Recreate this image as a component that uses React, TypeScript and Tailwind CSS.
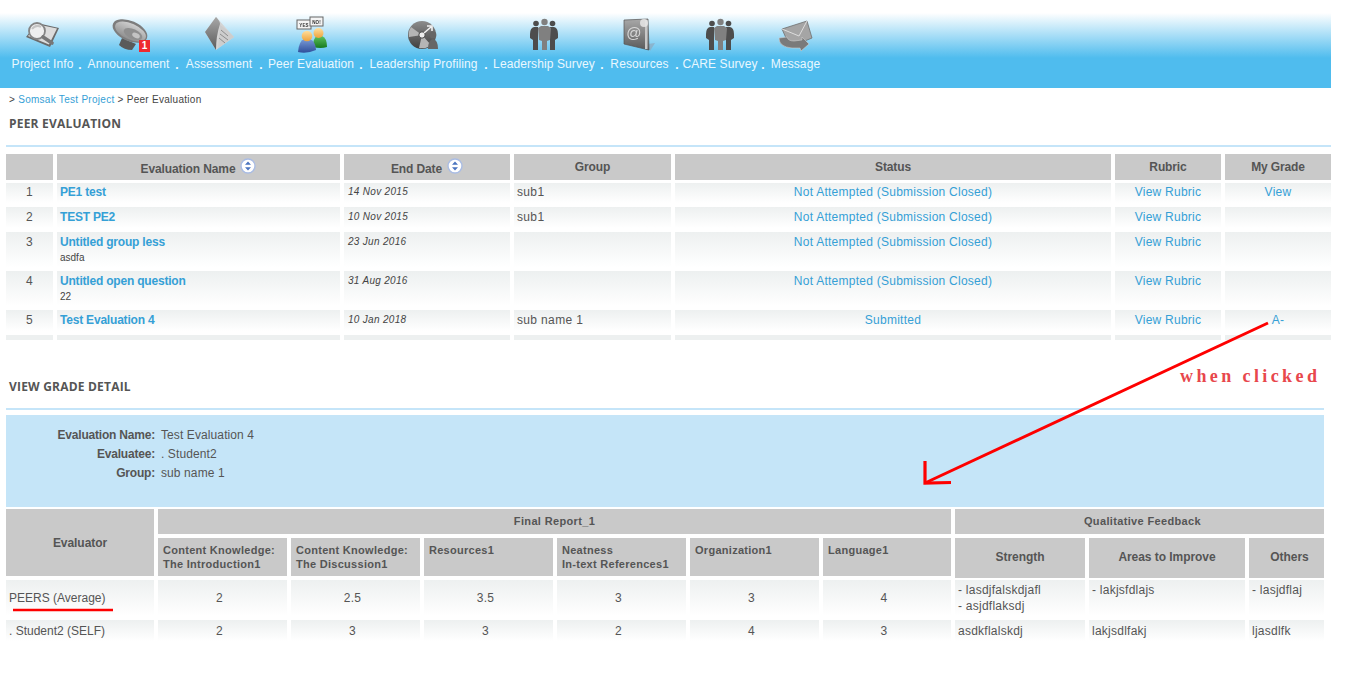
import React from "react";

const Grad = ({ id, a, b }: { id: string; a: string; b: string }) => (
  <linearGradient id={id} x1="0" y1="0" x2="0" y2="1">
    <stop offset="0" stopColor={a} />
    <stop offset="1" stopColor={b} />
  </linearGradient>
);

const Defs = () => (
  <svg width="0" height="0" className="absolute">
    <defs>
      <Grad id="g1" a="#a8a8a8" b="#5a5a5a" />
      <Grad id="g2" a="#cfcfcf" b="#8f8f8f" />
      <Grad id="g3" a="#8c8c8c" b="#3f3f3f" />
      <Grad id="gb" a="#7b9bd6" b="#2f4f9c" />
      <Grad id="gg" a="#5fc25f" b="#167a1e" />
      <Grad id="gs" a="#ffdf9e" b="#eda23c" />
    </defs>
  </svg>
);

const S = ({ children }: { children: React.ReactNode }) => (
  <svg width="50" height="40" viewBox="0 0 50 40" className="block blur-[0.4px] shrink-0">
    {children}
  </svg>
);

const ProjectIcon = () => (
  <S>
    <polygon points="8,23 19,9 41,14 32,33" fill="#6a6a6a" />
    <polygon points="10,22 20,10.5 39,14.5 31,30.5" fill="#dcdcdc" />
    <circle cx="19" cy="17" r="8" fill="#efefef" stroke="#858585" strokeWidth="1.8" />
    <path d="M14 15q4-5 9-2" stroke="#c4c4c4" strokeWidth="2" fill="none" />
    <path d="M25 23l9 6" stroke="#777" strokeWidth="3.6" strokeLinecap="round" />
  </S>
);

const SpeakerIcon = () => (
  <S>
    <path d="M18 24l-3 7q5 5 13 5l4-6z" fill="#5a5a5a" />
    <ellipse cx="26" cy="17" rx="18.5" ry="10" transform="rotate(24 26 17)" fill="#7d7d7d" />
    <ellipse cx="26.5" cy="17.5" rx="16.5" ry="8" transform="rotate(24 26.5 17.5)" fill="url(#g2)" />
    <ellipse cx="29" cy="20" rx="10" ry="5" transform="rotate(24 29 20)" fill="#8f8f8f" />
    <ellipse cx="32" cy="21.5" rx="4" ry="2.4" transform="rotate(24 32 21.5)" fill="#c4c4c4" />
  </S>
);

const FolderIcon = () => (
  <S>
    <polygon points="11,18 22,3 40,23 22,36" fill="#d4d4d4" />
    <path d="M11 18L22 3q4 4 4 7q-4 12-4 26z" fill="url(#g1)" />
    <polygon points="26,11 33,16 40,23 24,34" fill="#cdcdcd" />
    <path d="M27 16l7 6M26 20l8 6M25 24l6 5" stroke="#8d8d8d" strokeWidth="1" />
  </S>
);

const PeerIcon = () => (
  <S>
    <rect x="11" y="6" width="14" height="9" fill="#f4f4f4" stroke="#666" />
    <text x="18" y="12.5" textAnchor="middle" fontSize="4.5" fontWeight="700" fill="#333" fontFamily="'Liberation Sans',sans-serif">YES</text>
    <rect x="24" y="3" width="13" height="9" fill="#f4f4f4" stroke="#666" />
    <text x="30.5" y="9.5" textAnchor="middle" fontSize="4.5" fontWeight="700" fill="#333" fontFamily="'Liberation Sans',sans-serif">NO!</text>
    <path d="M27 33q0-9 4-11h5q5 2 5 11q-6 2-14 0z" fill="url(#gg)" />
    <circle cx="32.5" cy="19" r="5" fill="url(#gs)" />
    <path d="M12 38q1-11 6-13h6q6 3 6 11q-9 4-18 2z" fill="url(#gb)" />
    <circle cx="21" cy="22" r="5.3" fill="url(#gs)" />
  </S>
);

const DiscIcon = () => (
  <S>
    <circle cx="23" cy="21" r="14" fill="url(#g3)" />
    <path d="M23 21L12 13a14 14 0 0 0-2 10zM23 21l9 10a14 14 0 0 1-12 3z" fill="#b5b5b5" />
    <circle cx="23" cy="21" r="3.2" fill="#eee" stroke="#444" />
    <path d="M25 19l7-6M28 12h5v5" stroke="#f2f2f2" strokeWidth="1.6" fill="none" />
    <circle cx="34" cy="21" r="3.4" fill="#666" />
    <path d="M29 35q0-9 5-10q5 1 5 10z" fill="#666" />
  </S>
);

const PeopleIcon = () => (
  <S>
    <circle cx="17" cy="9.5" r="2.8" fill="#4d4d4d" />
    <circle cx="33.5" cy="9.5" r="2.8" fill="#4d4d4d" />
    <path d="M11 20q0-6 4-7h4v23h-5v-10l-3-2zM39 20q0-6-4-7h-4v23h5v-10l3-2z" fill="#4d4d4d" />
    <circle cx="25.5" cy="8" r="3.2" fill="#808080" />
    <path d="M19 14l3-2h7l3 2-1 12-3 1v9h-5v-9l-3-1z" fill="#808080" />
  </S>
);

const BookIcon = () => (
  <S>
    <polygon points="33,30 40,29 35,37" fill="#8fa9bd" opacity="0.7" />
    <polygon points="9,6 33,5 34,36 9,30" fill="url(#g1)" stroke="#555" strokeWidth="0.7" />
    <rect x="30" y="6" width="2.5" height="29" fill="#c8c8c8" />
    <text x="19" y="24" textAnchor="middle" fontSize="15" fill="#d8d8d8" fontFamily="'Liberation Sans',sans-serif">@</text>
    <circle cx="29" cy="9" r="4" fill="#e8e8e8" opacity="0.85" />
  </S>
);

const MailIcon = () => (
  <S>
    <polygon points="11,15 36,7 41,24 19,33" fill="#a5a5a5" stroke="#6f6f6f" strokeWidth="0.8" />
    <path d="M11 15l17 7 8-15" stroke="#ddd" fill="none" strokeWidth="1" />
    <path d="M8 24q0 9 13 10l8 0 1 3 8-7-7-7v3l-8 1q-6 0-7-4z" fill="#7a7a7a" stroke="#cfcfcf" strokeWidth="0.6" />
  </S>
);

const nav: { label: string; w: string; icon: React.ReactNode; badge?: boolean }[] = [
  { label: "Project Info", w: "w-[61px]", icon: <ProjectIcon /> },
  { label: "Announcement", w: "w-[83px]", icon: <SpeakerIcon />, badge: true },
  { label: "Assessment", w: "w-[70px]", icon: <FolderIcon /> },
  { label: "Peer Evaluation", w: "w-[86px]", icon: <PeerIcon /> },
  { label: "Leadership Profiling", w: "w-[111px]", icon: <DiscIcon /> },
  { label: "Leadership Survey", w: "w-[102px]", icon: <PeopleIcon /> },
  { label: "Resources", w: "w-[61px]", icon: <BookIcon /> },
  { label: "CARE Survey", w: "w-[72px]", icon: <PeopleIcon /> },
  { label: "Message", w: "w-[51px]", icon: <MailIcon /> },
];

const SortIcon = () => (
  <svg width="16" height="16" viewBox="0 0 16 16" className="inline-block ml-[5px] relative -top-[3px]">
    <circle cx="8" cy="8" r="7" fill="#fff" stroke="#a9bce4" strokeWidth="1.4" />
    <path d="M8 3.5l3 3.2H5zM8 12.5l-3-3.2h6z" fill="#4a74c0" />
  </svg>
);

const cols1 = "grid grid-cols-[47px_283px_166px_157px_436px_106px_106px] gap-x-1 w-[1325px]";
const cols2 = "grid grid-cols-[148px_129px_129px_129px_129px_129px_128px_130px_156px_75px] gap-x-1 w-[1318px]";
const cell = "bg-linear-to-b from-[#edf0f0] to-white";
const th = "bg-[#c9c9c9] text-[#555] font-bold flex items-center justify-center";
const link = "text-[#35a0d6]";

const rows = [
  { n: 1, name: "PE1 test", sub: "", date: "14 Nov 2015", group: "sub1", status: "Not Attempted (Submission Closed)", grade: "View", h: "h-[20px] leading-[18px]" },
  { n: 2, name: "TEST PE2", sub: "", date: "10 Nov 2015", group: "sub1", status: "Not Attempted (Submission Closed)", grade: "", h: "h-[21px] leading-[20px]" },
  { n: 3, name: "Untitled group less", sub: "asdfa", date: "23 Jun 2016", group: "", status: "Not Attempted (Submission Closed)", grade: "", h: "h-[35px] leading-[20px]" },
  { n: 4, name: "Untitled open question", sub: "22", date: "31 Aug 2016", group: "", status: "Not Attempted (Submission Closed)", grade: "", h: "h-[35px] leading-[20px]" },
  { n: 5, name: "Test Evaluation 4", sub: "", date: "10 Jan 2018", group: "sub name 1", status: "Submitted", grade: "A-", h: "h-[21px] leading-[20px]" },
];

const crit = [
  { t: ["Content Knowledge:", "The Introduction1"], a: "2", b: "2" },
  { t: ["Content Knowledge:", "The Discussion1"], a: "2.5", b: "3" },
  { t: ["Resources1"], a: "3.5", b: "3" },
  { t: ["Neatness", "In-text References1"], a: "3", b: "2" },
  { t: ["Organization1"], a: "3", b: "4" },
  { t: ["Language1"], a: "4", b: "3" },
];

const Heading = ({ children }: { children: React.ReactNode }) => (
  <h2 className="font-['Open_Sans',sans-serif] font-bold text-[12px] tracking-[0.2px] leading-[16px] text-[#555] ml-[9px]">{children}</h2>
);

export default function App() {
  return (
    <div className="relative w-[1356px] h-[685px] overflow-hidden bg-white font-['Liberation_Sans',Arial,sans-serif] text-[12px] tracking-[0.25px] text-[#555]">
      <Defs />
      <header className="w-[1331px] h-[88px] bg-[linear-gradient(to_bottom,#ffffff_13px,#4fbcee_58px)] pt-[14px] pl-[12px] flex items-start tracking-[0.1px]">
        {nav.map((item, i) => (
          <React.Fragment key={item.label}>
            {i > 0 && (
              <span className="w-[14px] text-center text-[#f2fbff] font-bold mt-[43px] leading-[16px] tracking-normal">.</span>
            )}
            <div className={`relative flex flex-col items-center ${item.w}`}>
              {item.icon}
              {item.badge && (
                <span className="absolute left-[52px] top-[26px] w-[11px] h-[12px] bg-[#ee2a2f] text-white text-[10px] leading-[12px] font-bold text-center tracking-normal">1</span>
              )}
              <span className="text-[#eaf8ff] leading-[16px] mt-[2px] whitespace-nowrap">{item.label}</span>
            </div>
          </React.Fragment>
        ))}
      </header>

      <nav className="text-[10px] tracking-[0.28px] leading-[14px] ml-[9px] mt-[5px] text-[#444]">
        &gt; <span className={link}>Somsak Test Project</span> &gt; Peer Evaluation
      </nav>

      <div className="mt-[9px]">
        <Heading>PEER EVALUATION</Heading>
      </div>

      <div className="ml-[6px] w-[1325px] h-[2px] bg-[#c5e5f9] mt-[13px]" />

      <section className="ml-[6px] mt-[7px] h-[186px] overflow-hidden">
        <div className={`${cols1} h-[26px] mb-[3px] tracking-[-0.12px]`}>
          <div className={th} />
          <div className={`${th} pt-[3px]`}>Evaluation Name<SortIcon /></div>
          <div className={`${th} pt-[3px]`}>End Date<SortIcon /></div>
          <div className={th}>Group</div>
          <div className={th}>Status</div>
          <div className={th}>Rubric</div>
          <div className={th}>My Grade</div>
        </div>
        {rows.map((r) => (
          <div key={r.n} className={`${cols1} ${r.h} mb-[4px]`}>
            <div className={`${cell} text-center`}>{r.n}</div>
            <div className={`${cell} pl-[3px]`}>
              <div className={`${link} font-bold tracking-[-0.2px]`}>{r.name}</div>
              {r.sub && <div className="text-[10px] leading-[12px] text-[#444] tracking-normal">{r.sub}</div>}
            </div>
            <div className={`${cell} pl-[4px] italic text-[10px] tracking-[0.3px] text-[#444]`}>{r.date}</div>
            <div className={`${cell} pl-[3px] tracking-[0.35px]`}>{r.group}</div>
            <div className={`${cell} text-center ${link}`}>{r.status}</div>
            <div className={`${cell} text-center ${link}`}>View Rubric</div>
            <div className={`${cell} text-center ${link}`}>{r.grade}</div>
          </div>
        ))}
        <div className={`${cols1} h-[6px]`}>
          {[0, 1, 2, 3, 4, 5, 6].map((i) => (
            <div key={i} className="bg-[#edf0f0]" />
          ))}
        </div>
      </section>

      <div className="mt-[39px]">
        <Heading>VIEW GRADE DETAIL</Heading>
      </div>

      <div className="ml-[6px] w-[1318px] h-[2px] bg-[#c5e5f9] mt-[13px]" />

      <section className="ml-[6px] w-[1318px] h-[92px] bg-[#c5e5f8] mt-[5px] pt-[11px] grid grid-cols-[149px_1fr] gap-x-[6px] auto-rows-[19px] content-start leading-[18px] tracking-[0.1px]">
        <div className="font-bold text-right tracking-[-0.2px]">Evaluation Name:</div>
        <div>Test Evaluation 4</div>
        <div className="font-bold text-right tracking-[-0.2px]">Evaluatee:</div>
        <div>. Student2</div>
        <div className="font-bold text-right tracking-[-0.2px]">Group:</div>
        <div>sub name 1</div>
      </section>

      <section className="ml-[6px] mt-[2px]">
        <div className={`${cols2} grid-rows-[25px_40px] gap-y-1 text-[11px] tracking-[0.35px]`}>
          <div className={`${th} text-[12px] tracking-[-0.05px] row-span-2 h-[67px]`}>Evaluator</div>
          <div className={`${th} col-span-6`}>Final Report_1</div>
          <div className={`${th} col-span-3 pl-[6px]`}>Qualitative Feedback</div>
          {crit.map((c) => (
            <div key={c.t[0] + c.t[1]} className="bg-[#c9c9c9] text-[#555] font-bold h-[38px] pl-[5px] pt-[5px] leading-[14px] whitespace-nowrap tracking-[0.28px]">
              {c.t.map((l) => (
                <div key={l}>{l}</div>
              ))}
            </div>
          ))}
          <div className={`${th} text-[12px] tracking-[-0.05px] pb-[2px]`}>Strength</div>
          <div className={`${th} text-[12px] tracking-[-0.05px] pb-[2px]`}>Areas to Improve</div>
          <div className={`${th} text-[12px] tracking-[-0.05px] pb-[2px] pl-[6px]`}>Others</div>
        </div>
        <div className={`${cols2} h-[36px] mt-[2px] leading-[16px]`}>
          <div className={`${cell} pl-[3px] flex items-center tracking-normal`}>PEERS (Average)</div>
          {crit.map((c, i) => (
            <div key={i} className={`${cell} flex items-center justify-center pr-[6px]`}>{c.a}</div>
          ))}
          <div className={`${cell} pl-[3px] pt-[2px]`}>
            <div>- lasdjfalskdjafl</div>
            <div>- asjdflaksdj</div>
          </div>
          <div className={`${cell} pl-[3px] pt-[2px]`}>- lakjsfdlajs</div>
          <div className={`${cell} pl-[3px] pt-[2px]`}>- lasjdflaj</div>
        </div>
        <div className={`${cols2} h-[21px] mt-[4px] leading-[16px]`}>
          <div className={`${cell} pl-[3px] flex items-center tracking-normal`}>. Student2 (SELF)</div>
          {crit.map((c, i) => (
            <div key={i} className={`${cell} flex items-center justify-center pr-[6px]`}>{c.b}</div>
          ))}
          <div className={`${cell} pl-[3px] flex items-center`}>asdkflalskdj</div>
          <div className={`${cell} pl-[3px] flex items-center`}>lakjsdlfakj</div>
          <div className={`${cell} pl-[3px] flex items-center`}>ljasdlfk</div>
        </div>
      </section>

      <svg className="absolute left-0 top-0 pointer-events-none" width="1356" height="685" viewBox="0 0 1356 685">
        <path d="M1268 323L925 483" stroke="#fe0000" strokeWidth="3" fill="none" />
        <path d="M925 461V483L951 482.5" stroke="#fe0000" strokeWidth="3.2" fill="none" />
        <path d="M13 610H113" stroke="#fe0000" strokeWidth="2.4" fill="none" />
      </svg>
      <span className="absolute left-[1180px] top-[366px] font-['Liberation_Serif',serif] font-bold text-[18px] leading-[20px] tracking-[3.4px] text-[#e8474c] whitespace-nowrap">
        when clicked
      </span>
    </div>
  );
}
